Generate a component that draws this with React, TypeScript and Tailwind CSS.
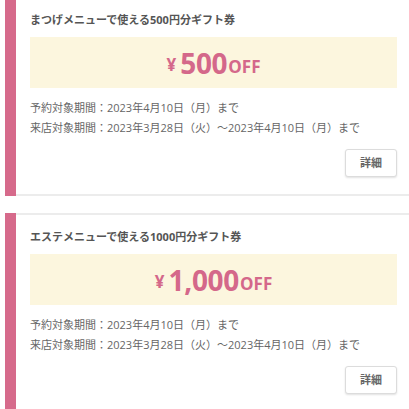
import React from 'react';

const coupons = [
  { title: 'まつげメニューで使える500円分ギフト券', amount: '500' },
  { title: 'エステメニューで使える1000円分ギフト券', amount: '1,000' },
];

const CouponCard = ({ title, amount }: { title: string; amount: string }) => (
  <div className="flex ml-[5px] mb-[17px]">
    <div className="w-[11px] shrink-0 bg-[#d66a8b]" />
    <div className="flex-1 border-y-2 border-[#ececec] bg-white pl-[14px] pr-[12px] pt-[14px] pb-[17px]">
      <h2 className="text-[11px] leading-[16px] font-bold text-[#555]">{title}</h2>
      <div className="mt-[9px] h-[51px] bg-[#fcf6de] flex items-center justify-center text-[#d4688a] font-bold">
        <span className="text-[17px] leading-none mr-[4px] mt-[4px]">¥</span>
        <span className="text-[28px] leading-none tracking-[-0.3px]">{amount}</span>
        <span className="text-[17px] leading-none mt-[7px] ml-[1px]">OFF</span>
      </div>
      <div className="mt-[10px] text-[11px] leading-[20px] text-[#666]">
        <p>予約対象期間：2023年4月10日（月）まで</p>
        <p>来店対象期間：2023年3月28日（火）～2023年4月10日（月）まで</p>
      </div>
      <div className="mt-[11px] flex justify-end">
        <button className="w-[52px] h-[28px] rounded-[3px] border border-[#dcdcdc] bg-white shadow-[0_1px_2px_rgba(0,0,0,0.12)] text-[11px] font-bold text-[#666]">
          詳細
        </button>
      </div>
    </div>
  </div>
);

export default function App() {
  return (
    <div
      className="w-[409px] h-[409px] overflow-hidden bg-white"
      style={{ fontFamily: '"Open Sans", "Noto Sans CJK JP", sans-serif' }}
    >
      <div className="mt-[-4px]">
        {coupons.map((c, i) => (
          <CouponCard key={i} title={c.title} amount={c.amount} />
        ))}
      </div>
    </div>
  );
}
